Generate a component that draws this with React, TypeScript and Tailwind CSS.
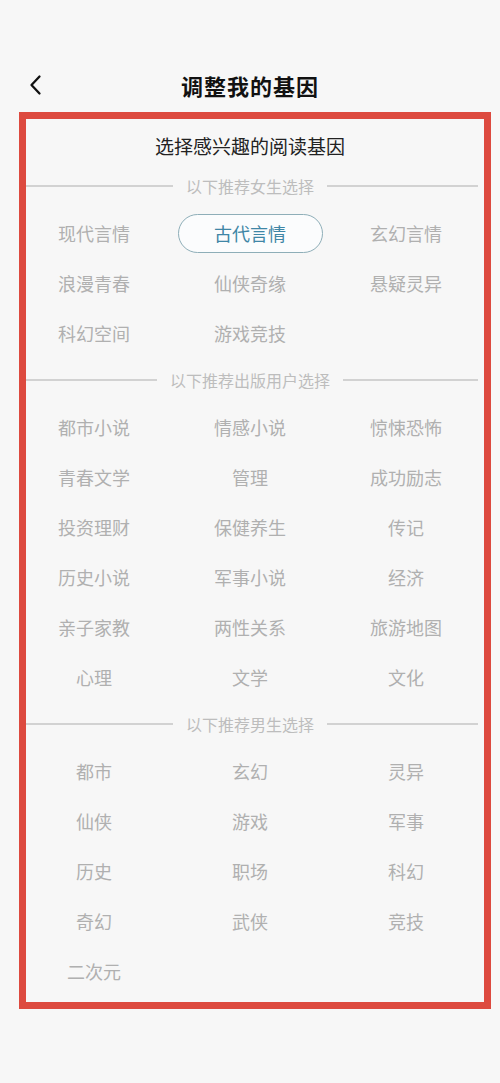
import React from 'react';

const female = ['现代言情', '古代言情', '玄幻言情', '浪漫青春', '仙侠奇缘', '悬疑灵异', '科幻空间', '游戏竞技'];
const publish = ['都市小说', '情感小说', '惊悚恐怖', '青春文学', '管理', '成功励志', '投资理财', '保健养生', '传记', '历史小说', '军事小说', '经济', '亲子家教', '两性关系', '旅游地图', '心理', '文学', '文化'];
const male = ['都市', '玄幻', '灵异', '仙侠', '游戏', '军事', '历史', '职场', '科幻', '奇幻', '武侠', '竞技', '二次元'];

const selected = '古代言情';

function SectionHeader({ label }: { label: string }) {
  return (
    <div className="h-[44px] flex items-center px-[22px] gap-[13px]">
      <div className="flex-1 h-[1.5px] bg-[#d2d2d2]" />
      <span className="text-[16px] leading-none text-[#bdbdbd]">{label}</span>
      <div className="flex-1 h-[1.5px] bg-[#d2d2d2]" />
    </div>
  );
}

function TagGrid({ items }: { items: string[] }) {
  return (
    <div className="grid grid-cols-3 px-4">
      {items.map((t) => (
        <div key={t} className="h-[50px] flex items-center justify-center">
          {t === selected ? (
            <span className="w-[145px] h-[39px] rounded-full border-[1.5px] border-[#8eaeb8] bg-[#fbfcfd] flex items-center justify-center text-[18px] text-[#3f86a6]">
              {t}
            </span>
          ) : (
            <span className="text-[18px] text-[#b0b0b0]">{t}</span>
          )}
        </div>
      ))}
    </div>
  );
}

export default function App() {
  return (
    <div
      className="relative w-[500px] h-[1083px] bg-[#f7f7f7] overflow-hidden"
      style={{ fontFamily: '"Noto Sans CJK SC", "Noto Sans", sans-serif' }}
    >
      {/* Top bar */}
      <div className="h-[107px] pt-[63px]">
        <div className="relative h-[44px] flex items-center justify-center">
          <svg className="absolute left-[26px] top-[11px]" width="20" height="22" viewBox="0 0 20 22" fill="none">
            <path d="M13.5 2.5 L5.5 11 L13.5 19.5" stroke="#111" strokeWidth="2.3" strokeLinecap="round" strokeLinejoin="round" />
          </svg>
          <h1 className="text-[22px] font-bold text-[#111] tracking-[1px]">调整我的基因</h1>
        </div>
      </div>

      {/* Content */}
      <div className="h-[57px] pt-[28px] text-center text-[19px] leading-[22px] text-[#222]">选择感兴趣的阅读基因</div>
      <SectionHeader label="以下推荐女生选择" />
      <TagGrid items={female} />
      <SectionHeader label="以下推荐出版用户选择" />
      <TagGrid items={publish} />
      <SectionHeader label="以下推荐男生选择" />
      <TagGrid items={male} />

      {/* Red highlight overlay */}
      <div className="absolute left-[19px] top-[112px] w-[472px] h-[897px] border-[7px] border-[#dd4a3f] pointer-events-none" />
    </div>
  );
}
